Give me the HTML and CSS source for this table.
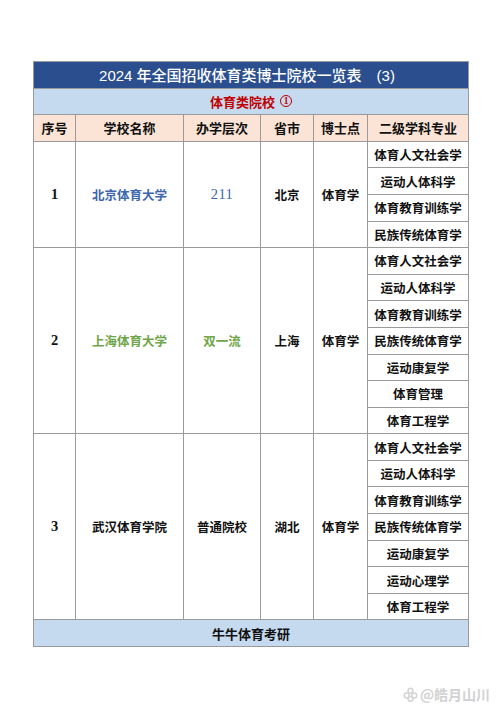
FILE: index.html
```html
<!DOCTYPE html>
<html lang="zh">
<head>
<meta charset="utf-8">
<link rel="stylesheet" href="styles.css">
</head>
<body>
<div class="page">
  <div class="table">
    <div class="cell title">2024 年全国招收体育类博士院校一览表　(3)</div>
    <div class="cell sub">体育类院校 <span class="circ">1</span></div>
    <div class="cell head">序号</div>
    <div class="cell head">学校名称</div>
    <div class="cell head">办学层次</div>
    <div class="cell head">省市</div>
    <div class="cell head">博士点</div>
    <div class="cell head">二级学科专业</div>

    <div class="cell span4 num">1</div>
    <div class="cell span4 blue">北京体育大学</div>
    <div class="cell span4 blue num light">211</div>
    <div class="cell span4">北京</div>
    <div class="cell span4">体育学</div>
    <div class="cell">体育人文社会学</div>
    <div class="cell">运动人体科学</div>
    <div class="cell">体育教育训练学</div>
    <div class="cell">民族传统体育学</div>

    <div class="cell span7 num">2</div>
    <div class="cell span7 green">上海体育大学</div>
    <div class="cell span7 green">双一流</div>
    <div class="cell span7">上海</div>
    <div class="cell span7">体育学</div>
    <div class="cell">体育人文社会学</div>
    <div class="cell">运动人体科学</div>
    <div class="cell">体育教育训练学</div>
    <div class="cell">民族传统体育学</div>
    <div class="cell">运动康复学</div>
    <div class="cell">体育管理</div>
    <div class="cell">体育工程学</div>

    <div class="cell span7 num">3</div>
    <div class="cell span7">武汉体育学院</div>
    <div class="cell span7">普通院校</div>
    <div class="cell span7">湖北</div>
    <div class="cell span7">体育学</div>
    <div class="cell">体育人文社会学</div>
    <div class="cell">运动人体科学</div>
    <div class="cell">体育教育训练学</div>
    <div class="cell">民族传统体育学</div>
    <div class="cell">运动康复学</div>
    <div class="cell">运动心理学</div>
    <div class="cell">体育工程学</div>

    <div class="cell foot">牛牛体育考研</div>
  </div>
  <div class="mark">
    <svg class="mark-icon" width="15" height="15" viewBox="0 0 16 16" fill="none" stroke="#d4d4d4" stroke-width="1.6">
      <circle cx="8" cy="4" r="2.6"/>
      <circle cx="4" cy="9" r="2.6"/>
      <circle cx="12" cy="9" r="2.6"/>
      <circle cx="8" cy="12.5" r="2.6"/>
    </svg>
    <span>@皓月山川</span>
  </div>
</div>
</body>
</html>
```

FILE: styles.css
```css
html, body {
  margin: 0;
  padding: 0;
  background: #ffffff;
}
.page {
  width: 500px;
  height: 707px;
  padding: 61px 0 0 33px;
  box-sizing: border-box;
  font-family: "Liberation Serif", "Noto Sans CJK SC", serif;
  color: #111;
}
.table {
  width: 436px;
  height: 586px;
  box-sizing: border-box;
  display: grid;
  grid-template-columns: 41px 107px 76px 52px 53px 100px;
  grid-template-rows: repeat(22, 1fr);
  gap: 1px;
  padding: 1px;
  background: #9a9a9a;
}
.cell {
  background: #fff;
  display: flex;
  align-items: center;
  justify-content: center;
  font-size: 12.5px;
  font-weight: 700;
  white-space: nowrap;
}
.title {
  grid-column: 1 / -1;
  background: #2b4f8e;
  color: #fff;
  font-size: 15px;
  font-weight: 500;
  font-family: "Liberation Sans", "Noto Sans CJK SC", sans-serif;
  padding-right: 8px;
}
.sub {
  grid-column: 1 / -1;
  background: #c5d9ef;
  color: #c00000;
  font-size: 13px;
  gap: 5px;
}
.circ {
  display: inline-flex;
  align-items: center;
  justify-content: center;
  width: 12px;
  height: 12px;
  box-sizing: border-box;
  border: 1.5px solid #c00000;
  border-radius: 50%;
  font-size: 9.5px;
  font-weight: 700;
  line-height: 1;
}
.head {
  background: #fbe4d6;
  font-size: 13px;
}
.span4 { grid-row: span 4; }
.span7 { grid-row: span 7; }
.num { font-size: 14.5px; }
.light { font-weight: 400; letter-spacing: 0.5px; }
.blue { color: #3b66ad; }
.green { color: #6fa548; }
.foot {
  grid-column: 1 / -1;
  background: #c5d9ef;
  font-size: 13px;
}
.mark {
  display: flex;
  align-items: center;
  justify-content: flex-end;
  gap: 2px;
  width: 457px;
  margin-top: 37px;
  color: #d2d2d2;
  font-family: "Noto Sans CJK SC", sans-serif;
  font-size: 14px;
  font-weight: 700;
}
```
